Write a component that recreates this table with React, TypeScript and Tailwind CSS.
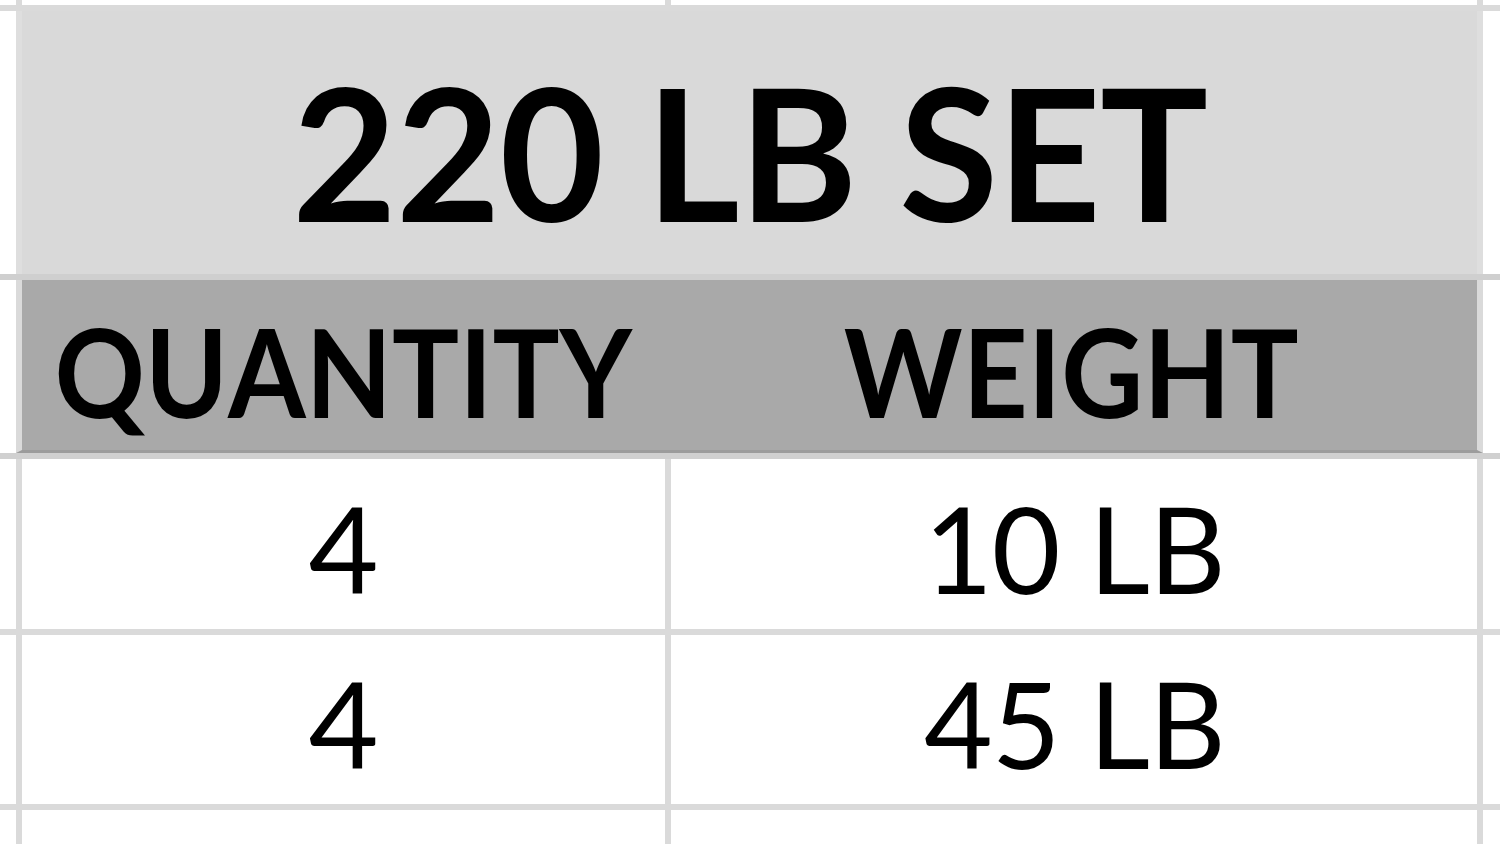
const Cell = ({ children, className = "" }: { children?: React.ReactNode; className?: string }) => (
  <div className={`flex justify-center items-start ${className}`}>{children}</div>
);

const App = () => {
  return (
    <div className="w-[1500px] h-[844px] bg-white overflow-hidden text-black font-['Lato',sans-serif]">
      {/* partial row above */}
      <div className="flex h-[11px] border-b-[6px] border-[#dadada]">
        <div className="w-[16px]" />
        <div className="w-[649px] border-l-[6px] border-[#dadada]" />
        <div className="w-[818px] border-x-[6px] border-[#dadada]" />
      </div>

      {/* title */}
      <div className="flex h-[269px] border-b-[6px] border-[#cfcfcf]">
        <div className="w-[16px]" />
        <Cell className="w-[1467px] bg-[#d9d9d9] border-x-[6px] border-[#dedede] pt-[48px]">
          <span className="text-[184px] font-bold leading-none tracking-[-1px] scale-x-[0.98]">220 LB SET</span>
        </Cell>
      </div>

      {/* header */}
      <div className="flex h-[179px] border-b-[6px] border-[#d0d0d0]">
        <div className="w-[16px]" />
        <div className="flex w-[1467px] bg-[#a9a9a9] border-x-[6px] border-[#dadada] border-b-[3px] border-b-[#9c9c9c]">
          <Cell className="w-[643px] pt-[29px]">
            <span className="text-[123px] font-bold leading-none [font-kerning:none] scale-x-[0.91]">QUANTITY</span>
          </Cell>
          <Cell className="w-[812px] pt-[29px]">
            <span className="text-[123px] font-bold leading-none scale-x-[0.92]">WEIGHT</span>
          </Cell>
        </div>
      </div>

      {/* data rows */}
      {[
        { qty: "4", weight: "10 LB", h: "h-[176px]", pt: "pt-[28px]" },
        { qty: "4", weight: "45 LB", h: "h-[175px]", pt: "pt-[27px]" },
      ].map((r, i) => (
        <div key={i} className={`flex ${r.h} border-b-[6px] border-[#dadada]`}>
          <div className="w-[16px]" />
          <Cell className={`w-[649px] border-l-[6px] border-[#dadada] ${r.pt}`}>
            <span className="text-[121px] leading-none">{r.qty}</span>
          </Cell>
          <Cell className={`w-[818px] border-x-[6px] border-[#dadada] ${r.pt}`}>
            <span className="text-[121px] leading-none tracking-[-1px] scale-x-[0.98]">{r.weight}</span>
          </Cell>
        </div>
      ))}

      {/* partial row below */}
      <div className="flex h-[40px]">
        <div className="w-[16px]" />
        <div className="w-[649px] border-l-[6px] border-[#dadada]" />
        <div className="w-[818px] border-x-[6px] border-[#dadada]" />
      </div>
    </div>
  );
};

export default App;
